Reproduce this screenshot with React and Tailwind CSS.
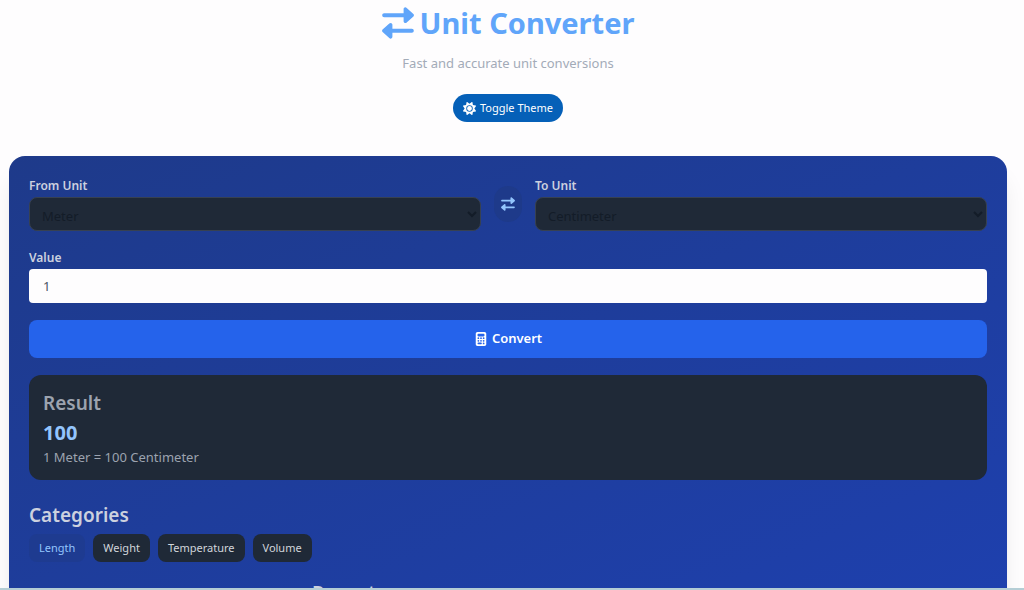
import { useState } from "react";
import { FaCalculator, FaSun } from "react-icons/fa6";

const CATEGORIES = {
  Length: { Meter: 1, Centimeter: 0.01, Kilometer: 1000, Inch: 0.0254, Foot: 0.3048 },
  Weight: { Kilogram: 1, Gram: 0.001, Pound: 0.45359237, Ounce: 0.028349523125 },
  Temperature: { Celsius: 1, Fahrenheit: 1, Kelvin: 1 },
  Volume: { Liter: 1, Milliliter: 0.001, Gallon: 3.785411784 },
};

function toCelsius(value, unit) {
  if (unit === "Fahrenheit") return ((value - 32) * 5) / 9;
  if (unit === "Kelvin") return value - 273.15;
  return value;
}

function fromCelsius(value, unit) {
  if (unit === "Fahrenheit") return (value * 9) / 5 + 32;
  if (unit === "Kelvin") return value + 273.15;
  return value;
}

function convert(category, from, to, value) {
  if (category === "Temperature") return fromCelsius(toCelsius(value, from), to);
  const units = CATEGORIES[category];
  return (value * units[from]) / units[to];
}

function ExchangeIcon({ className }) {
  return (
    <svg viewBox="0 0 32 32" className={className} fill="currentColor" aria-hidden="true">
      <path d="M2.2 6.3H21.6V2.2C21.6 .5 23.5 -.2 24.7 .9L31.4 7.1C32.1 7.8 32.1 8.8 31.4 9.5L24.7 15.5C23.5 16.6 21.6 15.9 21.6 14.2V10.3H2.2C1 10.3 .2 9.4 .2 8.3C.2 7.2 1 6.3 2.2 6.3Z" />
      <path d="M29.8 21.7H10.4V17.8C10.4 16.1 8.5 15.4 7.3 16.5L.6 22.5C-.1 23.2 -.1 24.2 .6 24.9L7.3 31.1C8.5 32.2 10.4 31.5 10.4 29.8V25.7H29.8C31 25.7 31.8 24.8 31.8 23.7C31.8 22.6 31 21.7 29.8 21.7Z" />
    </svg>
  );
}

function UnitSelect({ id, label, value, units, onChange }) {
  return (
    <div className="min-w-0 flex-1">
      <label htmlFor={id} className="block text-xs leading-4 font-semibold text-[#ccd1df]">
        {label}
      </label>
      <select
        id={id}
        value={value}
        onChange={(e) => onChange(e.target.value)}
        className="mt-[3px] block h-[34px] w-full rounded-lg border border-[#374151] bg-[#1f2937] px-2 pt-1 text-[13px] text-[#131c28]"
      >
        {units.map((unit) => (
          <option key={unit}>{unit}</option>
        ))}
      </select>
    </div>
  );
}

export default function App() {
  const [category, setCategory] = useState("Length");
  const [from, setFrom] = useState("Meter");
  const [to, setTo] = useState("Centimeter");
  const [value, setValue] = useState("1");
  const [result, setResult] = useState({ value: "1", from: "Meter", to: "Centimeter", output: 100 });
  const [dark, setDark] = useState(false);
  const units = Object.keys(CATEGORIES[category]);

  const pickCategory = (name) => {
    const names = Object.keys(CATEGORIES[name]);
    setCategory(name);
    setFrom(names[0]);
    setTo(names[1]);
  };

  const runConversion = (e) => {
    e.preventDefault();
    const output = Number(convert(category, from, to, Number(value)).toPrecision(8));
    setResult({ value, from, to, output });
  };

  const swap = () => {
    setFrom(to);
    setTo(from);
  };

  return (
    <div
      className={`flex h-screen flex-col overflow-hidden border-b-2 border-[#b4cdd5] font-['Noto_Sans','Open_Sans',sans-serif] ${dark ? "bg-gray-900" : "bg-[#fefdfe]"}`}
    >
      <div className="min-h-0 flex-1 overflow-hidden pr-[17px] pl-[9px]">
        <header className="flex flex-col items-center pt-[3px]">
          <h1 className="flex items-center gap-1.5 text-[29px] leading-10 font-bold text-[#60a5fa]">
            <ExchangeIcon className="size-8" />
            Unit Converter
          </h1>
          <p className="mt-[10px] text-[13px] leading-5 text-[#a3abb8]">Fast and accurate unit conversions</p>
          <button
            type="button"
            onClick={() => setDark(!dark)}
            className="mt-[21px] flex h-7 items-center gap-1 rounded-full bg-[#0560b8] px-2.5 text-[11px] text-white"
          >
            <FaSun className="size-[13px]" />
            Toggle Theme
          </button>
        </header>

        <main className="mt-[34px] rounded-2xl bg-linear-to-br from-[#1e3a8a] to-[#1e40af] px-5 pt-[22px] pb-5 shadow-xl">
          <form onSubmit={runConversion}>
            <div className="flex items-center gap-[13px]">
              <UnitSelect id="from-unit" label="From Unit" value={from} units={units} onChange={setFrom} />
              <button
                type="button"
                onClick={swap}
                aria-label="Swap units"
                className="mb-0.5 flex h-9 w-7 items-center justify-center rounded-full bg-[#1e3a8a] text-[#93c5fd]"
              >
                <ExchangeIcon className="size-3.5" />
              </button>
              <UnitSelect id="to-unit" label="To Unit" value={to} units={units} onChange={setTo} />
            </div>
            <label htmlFor="value" className="mt-[19px] block text-xs leading-4 font-semibold text-[#ccd1df]">
              Value
            </label>
            <input
              id="value"
              type="text"
              inputMode="decimal"
              value={value}
              onChange={(e) => setValue(e.target.value)}
              className="mt-[3px] block h-[34px] w-full rounded bg-[#fefdfe] px-3.5 text-[13px] text-[#4b5563]"
            />
            <button
              type="submit"
              className="mt-[17px] flex h-[38px] w-full items-center justify-center gap-1 rounded-lg bg-[#2563eb] text-[13px] font-semibold text-white"
            >
              <FaCalculator className="size-3.5" />
              Convert
            </button>
          </form>

          <section className="mt-[17px] rounded-xl bg-[#1f2937] px-3.5 py-[13px]">
            <h2 className="text-[19px] leading-[31px] font-semibold text-[#9ca3af]">Result</h2>
            <p className="text-xl leading-7 font-bold text-[#93c5fd]">{result.output}</p>
            <p className="text-[13px] leading-5 text-[#9ca3af]">
              {result.value} {result.from} = {result.output} {result.to}
            </p>
          </section>

          <section className="mt-[19px]">
            <h2 className="text-[19px] leading-8 font-semibold text-[#ccd1df]">Categories</h2>
            <div className="mt-[3px] flex flex-wrap gap-2">
              {Object.keys(CATEGORIES).map((name) => (
                <button
                  key={name}
                  type="button"
                  onClick={() => pickCategory(name)}
                  className={`h-7 rounded-lg px-2.5 text-[11px] ${name === category ? "bg-[#1e3a8a]/60 text-[#93c5fd]" : "bg-[#1f2937] text-[#d1d5db]"}`}
                >
                  {name}
                </button>
              ))}
            </div>
          </section>

          <section className="mt-[15px] pl-[283px]">
            <h2 className="text-[19px] leading-8 font-semibold text-[#ccd1df]">Recent</h2>
          </section>
        </main>
      </div>
    </div>
  );
}
